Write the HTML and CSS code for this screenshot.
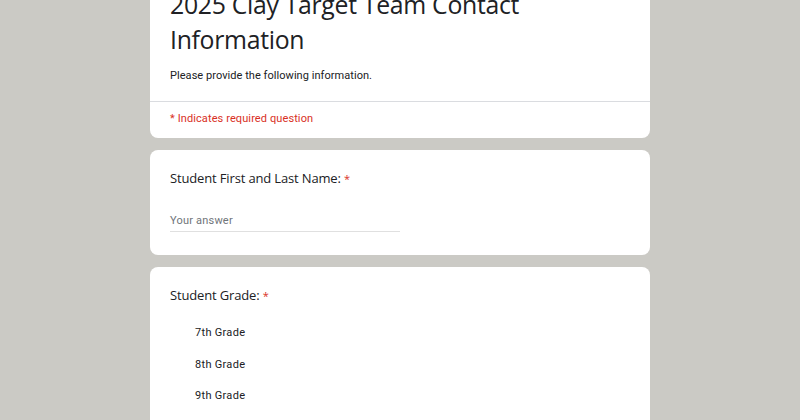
FILE: index.html
```html
<!DOCTYPE html>
<html>
<head>
<meta charset="utf-8">
<link rel="stylesheet" href="styles.css">
</head>
<body>
<div class="form">
  <div class="card header">
    <div class="head-body">
      <h1 class="title">2025 Clay Target Team Contact Information</h1>
      <p class="desc">Please provide the following information.</p>
    </div>
    <div class="required-note">* Indicates required question</div>
  </div>
  <div class="card question">
    <div class="q-title">Student First and Last Name: <span class="star">*</span></div>
    <div class="answer">Your answer</div>
  </div>
  <div class="card question">
    <div class="q-title">Student Grade: <span class="star">*</span></div>
    <div class="options">
      <div class="option">7th Grade</div>
      <div class="option">8th Grade</div>
      <div class="option">9th Grade</div>
    </div>
  </div>
</div>
</body>
</html>
```
FILE: styles.css
```css
html, body {
  margin: 0;
  padding: 0;
  background: #cbcac5;
  height: 100%;
  overflow: hidden;
}
body {
  font-family: Roboto, "Liberation Sans", sans-serif;
  color: #202124;
}
.form {
  width: 500px;
  margin: -38px auto 0;
  display: flex;
  flex-direction: column;
  gap: 12px;
}
.card {
  background: #fff;
  border-radius: 8px;
}
.head-body {
  padding: 25px 20px 17px;
  border-bottom: 1px solid #dadce0;
}
.title {
  margin: 0;
  font-family: "Open Sans", Roboto, sans-serif;
  font-weight: 400;
  font-size: 24.8px;
  line-height: 35px;
  letter-spacing: -0.3px;
  color: #202124;
}
.desc {
  margin: 11px 0 0;
  font-size: 11px;
  line-height: 16px;
  letter-spacing: 0.05px;
}
.required-note {
  padding: 9px 20px 11px;
  font-size: 11px;
  line-height: 16px;
  color: #d93025;
  letter-spacing: 0.1px;
}
.question {
  padding: 19px 20px 23px;
}
.q-title {
  font-family: "Open Sans", Roboto, sans-serif;
  font-size: 13px;
  line-height: 18px;
  letter-spacing: -0.15px;
}
.star {
  color: #d93025;
  font-size: 11px;
  line-height: 1;
}
.answer {
  margin-top: 26px;
  width: 230px;
  font-size: 11px;
  line-height: 16px;
  color: #70757a;
  padding-bottom: 2px;
  border-bottom: 1px solid #e0e0e0;
  letter-spacing: 0.2px;
}
.options {
  margin-top: 21px;
  padding-left: 25px;
  display: flex;
  flex-direction: column;
  gap: 15.5px;
}
.option {
  font-size: 11px;
  line-height: 16px;
  letter-spacing: 0.3px;
}
```
